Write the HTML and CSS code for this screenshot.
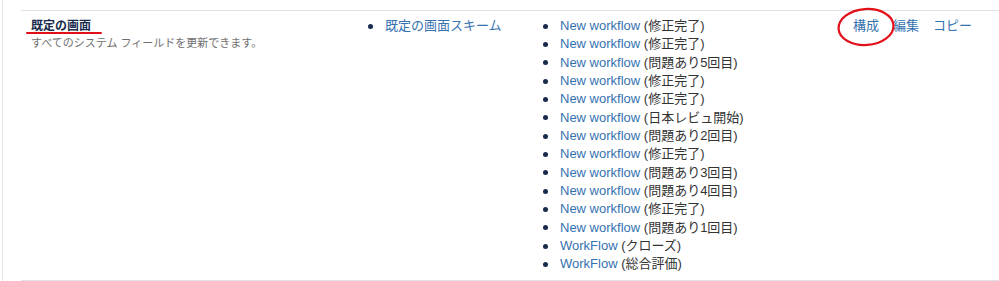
FILE: index.html
```html
<!DOCTYPE html>
<html lang="ja">
<head>
<meta charset="utf-8">
<title>画面</title>
<link rel="stylesheet" href="styles.css">
</head>
<body>
<div class="page">
  <div class="table">
    <div class="row">
      <div class="cell name">
        <a class="title" href="#">既定の画面</a>
        <div class="desc">すべてのシステム フィールドを更新できます。</div>
        <span class="mark-line"></span>
      </div>
      <div class="cell">
        <ul class="list">
          <li><a href="#">既定の画面スキーム</a></li>
        </ul>
      </div>
      <div class="cell">
        <ul class="list">
          <li><a href="#">New workflow</a>&nbsp;(修正完了)</li>
          <li><a href="#">New workflow</a>&nbsp;(修正完了)</li>
          <li><a href="#">New workflow</a>&nbsp;(問題あり5回目)</li>
          <li><a href="#">New workflow</a>&nbsp;(修正完了)</li>
          <li><a href="#">New workflow</a>&nbsp;(修正完了)</li>
          <li><a href="#">New workflow</a>&nbsp;(日本レビュ開始)</li>
          <li><a href="#">New workflow</a>&nbsp;(問題あり2回目)</li>
          <li><a href="#">New workflow</a>&nbsp;(修正完了)</li>
          <li><a href="#">New workflow</a>&nbsp;(問題あり3回目)</li>
          <li><a href="#">New workflow</a>&nbsp;(問題あり4回目)</li>
          <li><a href="#">New workflow</a>&nbsp;(修正完了)</li>
          <li><a href="#">New workflow</a>&nbsp;(問題あり1回目)</li>
          <li><a href="#">WorkFlow</a>&nbsp;(クローズ)</li>
          <li><a href="#">WorkFlow</a>&nbsp;(総合評価)</li>
        </ul>
      </div>
      <div class="cell actions">
        <a href="#" class="configure">構成
          <svg class="mark-ellipse" width="62" height="42" viewBox="0 0 62 42"><ellipse cx="31" cy="21" rx="27.5" ry="18" fill="none" stroke="#e3101a" stroke-width="2.2" transform="rotate(-4 31 21)"/></svg>
        </a>
        <a href="#">編集</a>
        <a href="#">コピー</a>
      </div>
    </div>
  </div>
</div>
</body>
</html>
```

FILE: styles.css
```css
html, body {
  margin: 0;
  padding: 0;
  background: #ffffff;
}

body {
  font-family: "Liberation Sans", "Noto Sans CJK JP", sans-serif;
  font-size: 13px;
  color: #333333;
  overflow: hidden;
}

a {
  color: #3572b0;
  text-decoration: none;
}

.page {
  margin-left: 2px;
  border-left: 1px solid #e6e6e6;
  height: 281px;
  padding: 10px 0 0 18px;
  box-sizing: border-box;
}

.table {
  border-top: 1px solid #dfe1e5;
  border-bottom: 1px solid #dfe1e5;
}

.row {
  display: grid;
  grid-template-columns: 347px 175px 300px 1fr;
}

.cell {
  padding: 6px 0 6px 0;
  line-height: 18.33px;
}

.name {
  padding-left: 10px;
  position: relative;
}

.title {
  display: block;
  font-weight: bold;
  font-size: 12px;
  color: #172b4d;
  line-height: 18px;
  width: max-content;
  text-decoration: underline;
  text-underline-offset: 2px;
  text-decoration-thickness: 1px;
}

.desc {
  font-size: 11px;
  color: #707070;
  line-height: 16px;
}

.mark-line {
  position: absolute;
  left: 5px;
  top: 20.5px;
  width: 76px;
  height: 2px;
  background: #e3101a;
  border-radius: 1px;
}

.list {
  list-style: none;
  margin: 0;
  padding: 0;
}

.list li {
  display: flex;
  align-items: center;
  white-space: nowrap;
}

.list li::before {
  content: "";
  flex: none;
  width: 5px;
  height: 5px;
  border-radius: 50%;
  background: #172b4d;
  margin-right: 12px;
}

.actions {
  padding-left: 10px;
  display: flex;
  align-items: flex-start;
  gap: 14px;
}

.configure {
  position: relative;
}

.mark-ellipse {
  position: absolute;
  left: -18px;
  top: -11px;
}
```
